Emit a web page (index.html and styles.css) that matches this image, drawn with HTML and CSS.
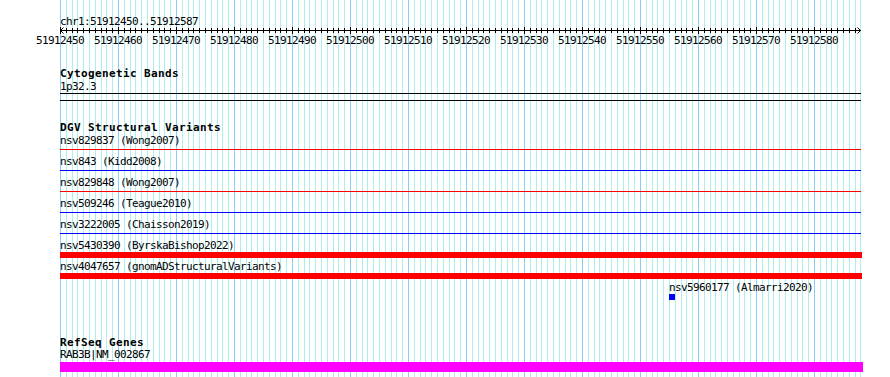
FILE: index.html
```html
<!DOCTYPE html>
<html lang="en">
<head>
<meta charset="utf-8">
<title>chr1:51912450..51912587</title>
<link rel="stylesheet" href="styles.css">
</head>
<body>
<div class="view">
  <svg class="grid" width="801" height="377" viewBox="0 0 801 377" shape-rendering="crispEdges" aria-hidden="true">
    <defs>
      <pattern id="gridpat" x="0" y="0" width="58" height="377" patternUnits="userSpaceOnUse">
        <rect x="6" y="0" width="1" height="377" fill="#afeeee"/>
        <rect x="12" y="0" width="1" height="377" fill="#afeeee"/>
        <rect x="17" y="0" width="1" height="377" fill="#afeeee"/>
        <rect x="23" y="0" width="1" height="377" fill="#afeeee"/>
        <rect x="29" y="0" width="1" height="377" fill="#afeeee"/>
        <rect x="35" y="0" width="1" height="377" fill="#afeeee"/>
        <rect x="41" y="0" width="1" height="377" fill="#afeeee"/>
        <rect x="46" y="0" width="1" height="377" fill="#afeeee"/>
        <rect x="52" y="0" width="1" height="377" fill="#afeeee"/>
        <rect x="0" y="0" width="1" height="377" fill="#87cefa"/>
      </pattern>
    </defs>
    <rect x="0" y="0" width="801" height="377" fill="url(#gridpat)"/>
  </svg>

  <div class="content">
    <div class="loc">chr1:51912450..51912587</div>

    <svg class="ruler" width="890" height="20" viewBox="0 0 890 20" aria-label="ruler">
      <defs>
        <pattern id="tickpat" x="60" y="1" width="58" height="7" patternUnits="userSpaceOnUse">
          <rect x="0" y="0" width="1" height="7"/>
          <rect x="6" y="1" width="1" height="5"/>
          <rect x="12" y="1" width="1" height="5"/>
          <rect x="17" y="1" width="1" height="5"/>
          <rect x="23" y="1" width="1" height="5"/>
          <rect x="29" y="1" width="1" height="5"/>
          <rect x="35" y="1" width="1" height="5"/>
          <rect x="41" y="1" width="1" height="5"/>
          <rect x="46" y="1" width="1" height="5"/>
          <rect x="52" y="1" width="1" height="5"/>
        </pattern>
      </defs>
      <g class="ruler-lines" shape-rendering="crispEdges">
        <line x1="60" y1="4.5" x2="861" y2="4.5"/>
        <rect x="60" y="1" width="797" height="7" fill="url(#tickpat)"/>
      </g>
      <g class="ruler-arrows">
        <polyline points="63.5,1.5 60.5,4.5 63.5,7.5"/>
        <polyline points="857.5,1.5 860.5,4.5 857.5,7.5"/>
      </g>
      <g class="ruler-labels">
        <text x="60" y="18">51912450</text>
        <text x="118" y="18">51912460</text>
        <text x="176" y="18">51912470</text>
        <text x="234" y="18">51912480</text>
        <text x="292" y="18">51912490</text>
        <text x="350" y="18">51912500</text>
        <text x="408" y="18">51912510</text>
        <text x="466" y="18">51912520</text>
        <text x="524" y="18">51912530</text>
        <text x="582" y="18">51912540</text>
        <text x="640" y="18">51912550</text>
        <text x="698" y="18">51912560</text>
        <text x="756" y="18">51912570</text>
        <text x="814" y="18">51912580</text>
      </g>
    </svg>

    <section class="track track-cyto">
      <h2 class="track-title">Cytogenetic Bands</h2>
      <div class="feat-label">1p32.3</div>
      <div class="band"></div>
    </section>

    <section class="track track-dgv">
      <h2 class="track-title">DGV Structural Variants</h2>
      <div class="sv-row">
        <div class="feat-label">nsv829837 (Wong2007)</div>
        <div class="feat-area"><div class="sv-line red"></div></div>
      </div>
      <div class="sv-row">
        <div class="feat-label">nsv843 (Kidd2008)</div>
        <div class="feat-area"><div class="sv-line blue"></div></div>
      </div>
      <div class="sv-row">
        <div class="feat-label">nsv829848 (Wong2007)</div>
        <div class="feat-area"><div class="sv-line red"></div></div>
      </div>
      <div class="sv-row">
        <div class="feat-label">nsv509246 (Teague2010)</div>
        <div class="feat-area"><div class="sv-line blue"></div></div>
      </div>
      <div class="sv-row">
        <div class="feat-label">nsv3222005 (Chaisson2019)</div>
        <div class="feat-area"><div class="sv-line blue"></div></div>
      </div>
      <div class="sv-row">
        <div class="feat-label">nsv5430390 (ByrskaBishop2022)</div>
        <div class="feat-area"><div class="sv-bar red"></div></div>
      </div>
      <div class="sv-row">
        <div class="feat-label">nsv4047657 (gnomADStructuralVariants)</div>
        <div class="feat-area"><div class="sv-bar red"></div></div>
      </div>
      <div class="sv-row sv-row-offset">
        <div class="feat-label">nsv5960177 (Almarri2020)</div>
        <div class="feat-area"><div class="sv-dot blue"></div></div>
      </div>
    </section>

    <section class="track track-refseq">
      <h2 class="track-title">RefSeq Genes</h2>
      <div class="feat-label gene-label">RAB3B|NM_002867</div>
      <div class="gene-bar"></div>
    </section>
  </div>
</div>
</body>
</html>
```

FILE: styles.css
```css
html, body {
  margin: 0;
  padding: 0;
  background: #ffffff;
}

.view {
  position: relative;
  width: 890px;
  height: 377px;
  overflow: hidden;
  background: #ffffff;
  color: #000000;
  font-family: "DejaVu Sans Mono", "Liberation Mono", monospace;
  font-size: 11px;
  letter-spacing: -0.62px;
}

.grid {
  position: absolute;
  left: 60px;
  top: 0;
  display: block;
}

.content {
  position: relative;
  display: flex;
  flex-direction: column;
  padding: 15px 0 0 60px;
}

.loc {
  height: 13px;
  line-height: 13px;
  white-space: nowrap;
}

.ruler {
  display: block;
  margin: -2px 0 0 -60px;
  overflow: visible;
}

.ruler-lines line {
  stroke: #000000;
  stroke-width: 1;
}

#tickpat rect {
  fill: #000000;
}

.ruler-arrows polyline {
  fill: none;
  stroke: #000000;
  stroke-width: 1;
}

.ruler-labels text {
  font-family: "DejaVu Sans Mono", "Liberation Mono", monospace;
  font-size: 11px;
  letter-spacing: -0.62px;
  text-anchor: middle;
  fill: #000000;
}

.track {
  display: flex;
  flex-direction: column;
}

.track-title {
  margin: 0;
  height: 13px;
  line-height: 13px;
  font-size: 11px;
  font-weight: bold;
  letter-spacing: 0.38px;
  white-space: nowrap;
}

.feat-label {
  height: 13px;
  line-height: 13px;
  white-space: nowrap;
}

.track-cyto {
  margin-top: 21px;
}

.band {
  box-sizing: border-box;
  width: 801px;
  height: 8px;
  border-top: 1px solid #000000;
  border-bottom: 1px solid #000000;
}

.track-dgv {
  margin-top: 20px;
}

.sv-row {
  display: flex;
  flex-direction: column;
  margin-bottom: 2px;
}

.feat-area {
  height: 6px;
  display: flex;
  flex-direction: column;
}

.sv-line {
  width: 801px;
  height: 1px;
  margin-top: 2px;
}

.sv-bar {
  width: 802px;
  height: 6px;
}

.sv-row-offset {
  padding-left: 609px;
}

.sv-dot {
  width: 6px;
  height: 6px;
}

.red { background: #ff0000; }
.blue { background: #0000ff; }

.track-refseq {
  margin-top: 35px;
}

.track-refseq .track-title {
  height: 12px;
  line-height: 12px;
}

.gene-label {
  line-height: 12px;
}

.gene-bar {
  width: 803px;
  height: 10px;
  background: #ff00ff;
}
```
